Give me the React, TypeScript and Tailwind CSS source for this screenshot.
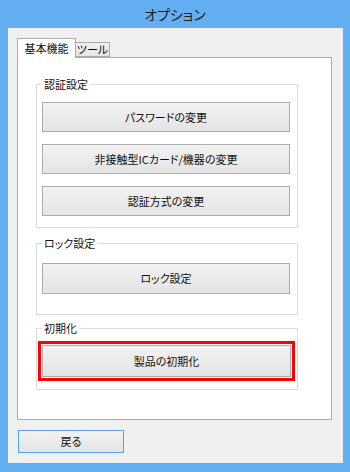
import React from "react";

function Btn({ children, className = "" }: { children: React.ReactNode; className?: string }) {
  return (
    <div
      className={`flex items-center justify-center border border-[#acacac] bg-linear-to-b from-[#f2f2f2] to-[#e4e4e4] text-[11px] leading-none text-[#111] ${className}`}
    >
      {children}
    </div>
  );
}

function Group({ label, className = "", children }: { label: string; className?: string; children: React.ReactNode }) {
  return (
    <div className={`relative ml-[18px] w-[262px] border border-[#dcdcdc] ${className}`}>
      <div className="absolute left-[5px] top-[-8px] bg-white px-[2px] text-[11px] leading-[14px] text-[#111]">
        {label}
      </div>
      {children}
    </div>
  );
}

export default function App() {
  return (
    <div className="flex h-[472px] w-[350px] flex-col bg-[#64aff2] font-['Noto_Sans_CJK_JP',sans-serif] [font-feature-settings:'palt']">
      <div className="flex h-[28px] items-center justify-center pt-[1px] text-[14px] text-[#1b1b1b]">オプション</div>
      <div className="mb-[9px] ml-[8px] mr-[7px] flex-1 bg-[#f0f0f0] pl-[9px] pt-[10px]">
        <div className="flex h-[19px] items-end">
          <div className="relative z-10 -mb-px flex h-[20px] w-[59px] items-start justify-center border-x border-t border-[#acacac] bg-white pt-[2px] text-[11px] leading-[14px] text-[#111]">
            基本機能
          </div>
          <div className="flex h-[15px] w-[34px] items-center justify-center border-y border-r border-[#acacac] bg-linear-to-b from-[#f0f0f0] to-[#e5e5e5] text-[11px] leading-none text-[#111]">
            ツール
          </div>
        </div>
        <div className="h-[363px] w-[315px] border border-[#acacac] bg-white">
          <Group label="認証設定" className="mt-[26px] pb-[11px] pl-[5px] pt-[17px]">
            <div className="flex flex-col gap-[12px]">
              <Btn className="h-[30px] w-[248px]">パスワードの変更</Btn>
              <Btn className="h-[30px] w-[248px]">非接触型ICカード/機器の変更</Btn>
              <Btn className="h-[30px] w-[248px]">認証方式の変更</Btn>
            </div>
          </Group>
          <Group label="ロック設定" className="mt-[15px] pb-[20px] pl-[5px] pt-[19px]">
            <Btn className="h-[31px] w-[248px]">ロック設定</Btn>
          </Group>
          <Group label="初期化" className="mt-[13px] pb-[8px] pl-[1px] pt-[12px]">
            <div className="w-[257px] border-[3px] border-[#ff0000] bg-white p-[1px]">
              <Btn className="h-[32px] w-full">製品の初期化</Btn>
            </div>
          </Group>
        </div>
        <Btn className="ml-[1px] mt-[10px] h-[23px] w-[106px] !border-[#56a3ea]">戻る</Btn>
      </div>
    </div>
  );
}
